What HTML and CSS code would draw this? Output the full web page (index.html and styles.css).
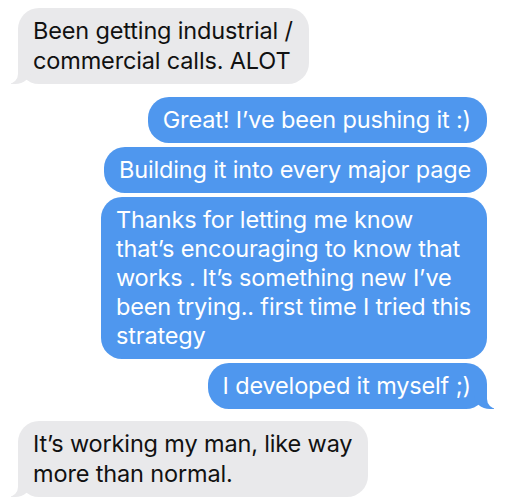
FILE: index.html
```html
<!DOCTYPE html>
<html lang="en">
<head>
    <meta charset="UTF-8">
    <meta name="viewport" content="width=device-width, initial-scale=1.0">
    <title>Messages</title>
    <link rel="stylesheet" href="styles.css">
</head>
<body>
    <div class="thread">
        <div class="msg them tail">Been getting industrial /<br>commercial calls. ALOT</div>

        <div class="group">
            <div class="msg me">Great! I’ve been pushing it :)</div>
            <div class="msg me">Building it into every major page</div>
            <div class="msg me">Thanks for letting me know<br>that’s encouraging to know that<br>works . It’s something new I’ve<br>been trying.. first time I tried this<br>strategy</div>
            <div class="msg me tail">I developed it myself ;)</div>
        </div>

        <div class="msg them tail">It’s working my man, like way<br>more than normal.</div>
    </div>
</body>
</html>
```

FILE: styles.css
```css
body {
    margin: 0;
    background-color: #fff;
    font-family: Inter, "Noto Sans", sans-serif;
}
.thread {
    display: flex;
    flex-direction: column;
    gap: 12px;
    padding: 8px 20px 0 18px;
}
.group {
    display: flex;
    flex-direction: column;
    align-items: flex-end;
    gap: 4px;
    margin-top: 1px;
}
.msg {
    position: relative;
    width: fit-content;
    padding: 8px 16px 9px 15px;
    border-radius: 21px;
    font-size: 23.5px;
    line-height: 29px;
    letter-spacing: -0.15px;
    white-space: nowrap;
}
.them {
    background-color: #e9e9eb;
    color: #111;
    padding-bottom: 8px;
    line-height: 30px;
}
.me {
    background-color: #4f97ee;
    color: #fff;
}

/* little tail on the last bubble of a run */
.tail::before,
.tail::after {
    content: "";
    position: absolute;
    bottom: 0;
    height: 22px;
}
.them.tail::before {
    left: -7px;
    width: 20px;
    background-color: #e9e9eb;
    border-bottom-right-radius: 16px 14px;
}
.them.tail::after {
    left: -26px;
    width: 26px;
    background-color: #fff;
    border-bottom-right-radius: 10px;
}
.me.tail::before {
    right: -7px;
    width: 20px;
    background-color: #4f97ee;
    border-bottom-left-radius: 16px 14px;
}
.me.tail::after {
    right: -26px;
    width: 26px;
    background-color: #fff;
    border-bottom-left-radius: 10px;
}
```
